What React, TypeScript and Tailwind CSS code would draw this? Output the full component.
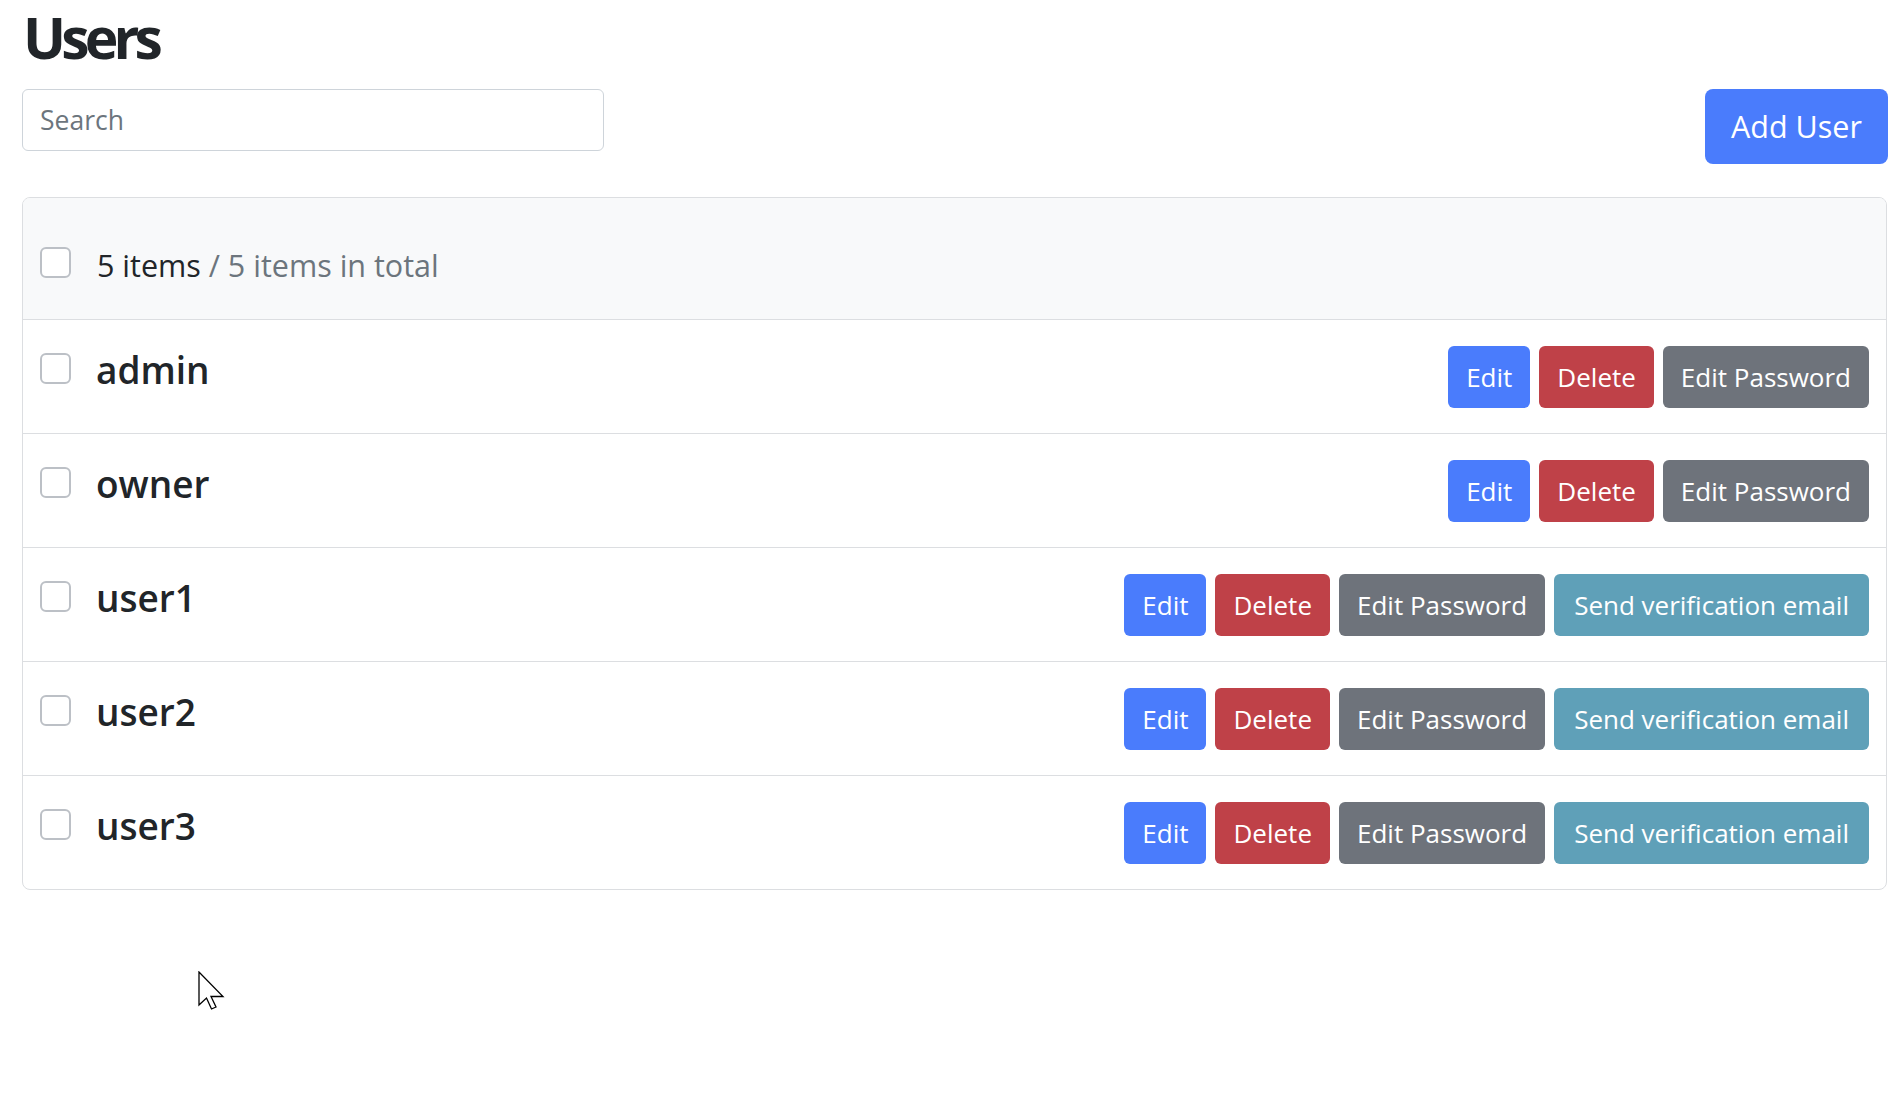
import React from 'react';

type User = { name: string; verify: boolean };

const users: User[] = [
    { name: 'admin', verify: false },
    { name: 'owner', verify: false },
    { name: 'user1', verify: true },
    { name: 'user2', verify: true },
    { name: 'user3', verify: true },
];

function Checkbox({ className = '' }: { className?: string }) {
    return (
        <span className={`block w-[31px] h-[31px] shrink-0 rounded-[6px] border-2 border-[#bcc0c6] bg-white ${className}`} />
    );
}

function Btn({ color, wide, children }: { color: string; wide?: boolean; children: React.ReactNode }) {
    return (
        <button className={`h-[62px] ${wide ? 'px-[20px]' : 'px-[18px]'} rounded-[6px] text-white text-[26px] leading-[62px] whitespace-nowrap ${color}`}>
            {children}
        </button>
    );
}

export default function App() {
    return (
        <div className="relative min-h-screen bg-white font-['Open_Sans',sans-serif] text-[#212529]">
            <div className="pl-[22px]">
                {/* Header */}
                <h1 className="pt-[9px] text-[57px] leading-[56px] font-bold tracking-[-0.085em] pl-[1px]">Users</h1>

                <div className="flex items-start mt-[24px]">
                    <input
                        type="text"
                        placeholder="Search"
                        className="w-[582px] h-[62px] rounded-[6px] border border-[#ced4da] pl-[17px] text-[26.5px] placeholder:text-[#6c757d] outline-none"
                    />
                    <button className="ml-auto w-[183px] h-[75px] rounded-[8px] bg-[#4a7cfc] text-white text-[30.5px] leading-[75px]">
                        Add User
                    </button>
                </div>

                {/* List */}
                <div className="mt-[33px] mr-[1px] border border-[#dcdee1] rounded-[8px] overflow-hidden">
                    <div className="h-[121px] bg-[#f8f9fa] flex items-start pt-[44px] pl-[17px]">
                        <Checkbox className="mt-[5px]" />
                        <span className="ml-[26px] text-[30.5px] leading-[46px]">
                            5 items <span className="text-[#6c757d]">/ 5 items in total</span>
                        </span>
                    </div>

                    {users.map((u) => (
                        <div key={u.name} className="h-[114px] border-t border-[#dcdee1] flex items-center pl-[17px] pr-[17px]">
                            <div className="self-start pt-[28px] flex items-start">
                                <Checkbox className="mt-[5px]" />
                                <span className="ml-[25px] text-[37px] leading-[44px] font-semibold">{u.name}</span>
                            </div>
                            <div className="ml-auto flex items-center gap-[9px]">
                                <Btn color="bg-[#4a7cfc]">Edit</Btn>
                                <Btn color="bg-[#bf4148]">Delete</Btn>
                                <Btn color="bg-[#6e737b]">Edit Password</Btn>
                                {u.verify && <Btn color="bg-[#5fa0b8]" wide>Send verification email</Btn>}
                            </div>
                        </div>
                    ))}
                </div>
            </div>

            {/* mouse pointer */}
            <svg className="absolute left-[198px] top-[971px]" width="27" height="40" viewBox="0 0 27 40">
                <path d="M1 1 L1 34 L8.5 27 L13.5 38 L18 36 L13 25.5 L25 25.5 Z" fill="white" stroke="black" strokeWidth="1.3" strokeLinejoin="miter" />
            </svg>
        </div>
    );
}
